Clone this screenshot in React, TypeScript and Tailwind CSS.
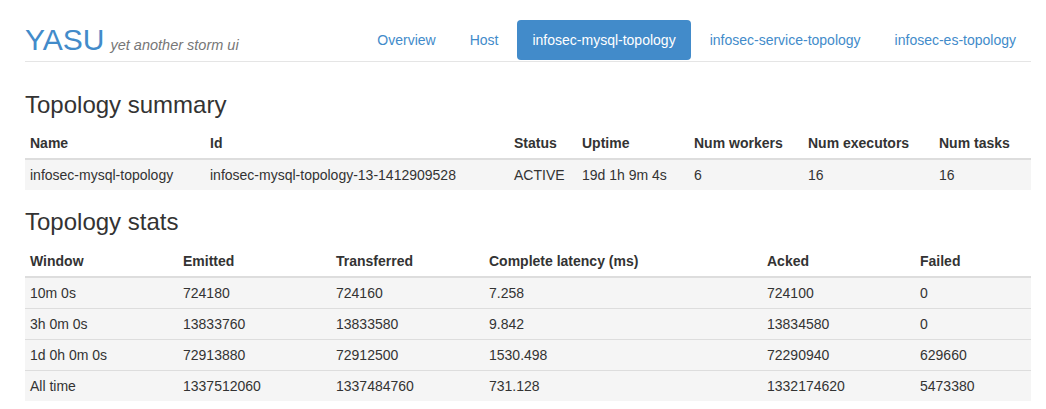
const navItems = [
  { label: "Overview", active: false },
  { label: "Host", active: false },
  { label: "infosec-mysql-topology", active: true },
  { label: "infosec-service-topology", active: false },
  { label: "infosec-es-topology", active: false },
];

const summaryCols = [
  { label: "Name", w: "w-[180px]" },
  { label: "Id", w: "w-[304px]" },
  { label: "Status", w: "w-[68px]" },
  { label: "Uptime", w: "w-[112px]" },
  { label: "Num workers", w: "w-[114px]" },
  { label: "Num executors", w: "w-[131px]" },
  { label: "Num tasks", w: "w-[97px]" },
];

const summaryRows = [
  ["infosec-mysql-topology", "infosec-mysql-topology-13-1412909528", "ACTIVE", "19d 1h 9m 4s", "6", "16", "16"],
];

const statsCols = [
  { label: "Window", w: "w-[153px]" },
  { label: "Emitted", w: "w-[153px]" },
  { label: "Transferred", w: "w-[153px]" },
  { label: "Complete latency (ms)", w: "w-[278px]" },
  { label: "Acked", w: "w-[153px]" },
  { label: "Failed", w: "w-[116px]" },
];

const statsRows = [
  ["10m 0s", "724180", "724160", "7.258", "724100", "0"],
  ["3h 0m 0s", "13833760", "13833580", "9.842", "13834580", "0"],
  ["1d 0h 0m 0s", "72913880", "72912500", "1530.498", "72290940", "629660"],
  ["All time", "1337512060", "1337484760", "731.128", "1332174620", "5473380"],
];

function DataTable({ cols, rows }: { cols: { label: string; w: string }[]; rows: string[][] }) {
  return (
    <table className="w-full table-fixed border-collapse text-[14px] leading-[20px] text-[#333]">
      <colgroup>
        {cols.map((c) => (
          <col key={c.label} className={c.w} />
        ))}
      </colgroup>
      <thead>
        <tr>
          {cols.map((c) => (
            <th key={c.label} className="border-b-2 border-[#ddd] px-[5px] py-[5px] text-left font-bold whitespace-nowrap">
              {c.label}
            </th>
          ))}
        </tr>
      </thead>
      <tbody>
        {rows.map((r, i) => (
          <tr key={i} className="bg-[#f5f5f5]">
            {r.map((cell, j) => (
              <td key={j} className="border-t border-[#ddd] px-[5px] py-[5px] whitespace-nowrap">
                {cell}
              </td>
            ))}
          </tr>
        ))}
      </tbody>
    </table>
  );
}

export default function App() {
  return (
    <div className="min-h-screen bg-white pl-[25px] pr-[15px] pt-[20px] font-['Liberation_Sans',Arial,sans-serif] text-[#333]">
      <div className="flex h-[42px] items-start justify-between border-b border-[#e5e5e5]">
        <div className="flex items-baseline gap-[6px]">
          <span className="text-[30px] leading-[40px] text-[#428bca]">YASU</span>
          <span className="text-[14.5px] leading-[20px] italic text-[#777]">yet another storm ui</span>
        </div>
        <nav className="flex gap-[4px] text-[14px] leading-[20px]">
          {navItems.map((item) => (
            <a
              key={item.label}
              href="#"
              className={`rounded-[4px] px-[15px] py-[10px] ${
                item.active ? "bg-[#428bca] text-white" : "text-[#428bca]"
              }`}
            >
              {item.label}
            </a>
          ))}
        </nav>
      </div>

      <h3 className="mt-[30px] mb-[10px] text-[24px] leading-[26.4px] font-normal">Topology summary</h3>
      <DataTable cols={summaryCols} rows={summaryRows} />

      <h3 className="mt-[19px] mb-[10px] text-[24px] leading-[26.4px] font-normal">Topology stats</h3>
      <DataTable cols={statsCols} rows={statsRows} />
    </div>
  );
}
